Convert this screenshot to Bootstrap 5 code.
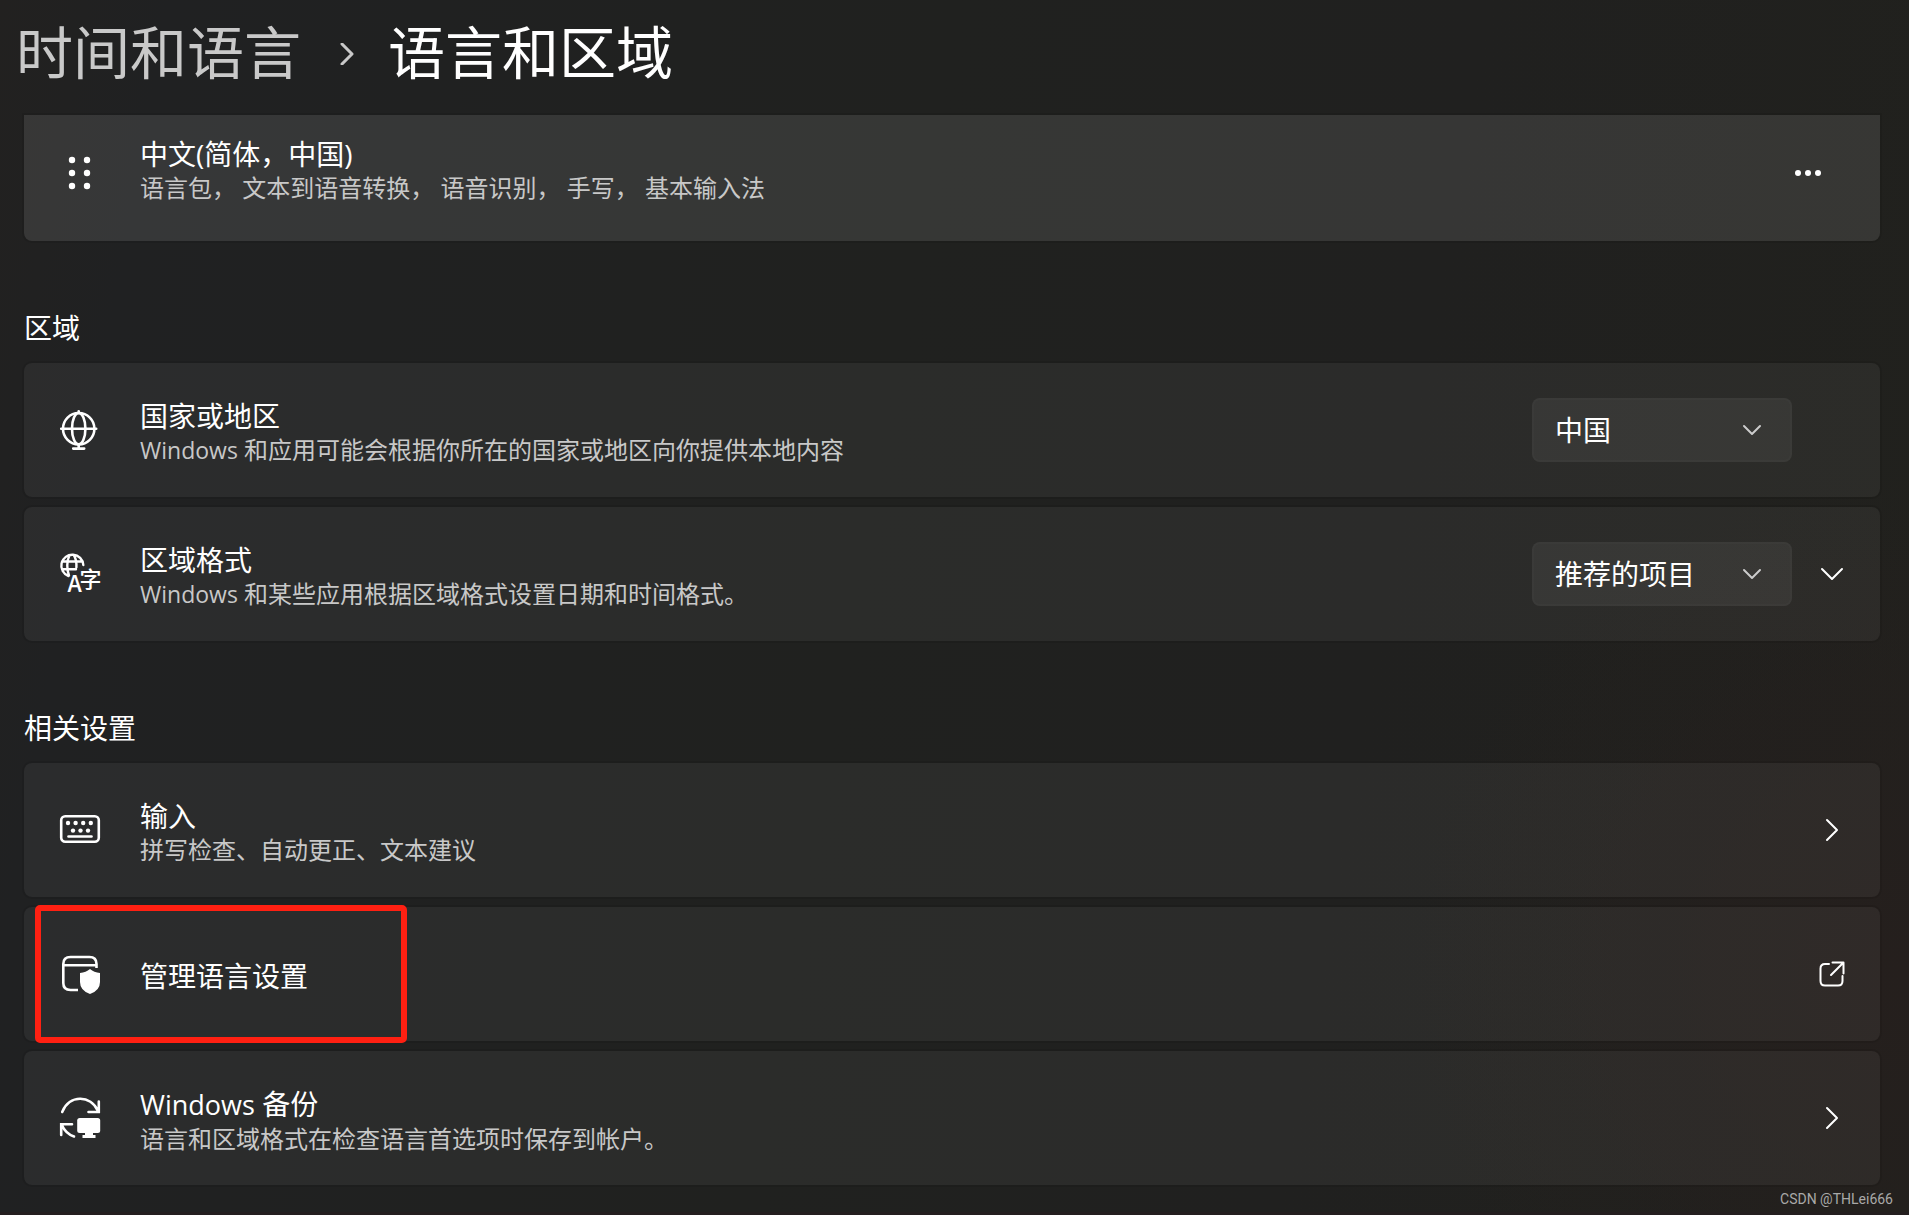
<!DOCTYPE html>
<html lang="zh-CN" data-bs-theme="dark">
<head>
<meta charset="utf-8">
<meta name="viewport" content="width=device-width, initial-scale=1">
<title>语言和区域</title>
<link href="https://cdn.jsdelivr.net/npm/bootstrap@5.3.0/dist/css/bootstrap.min.css" rel="stylesheet">
<style>
body{font-family:"Open Sans","Noto Sans CJK SC",sans-serif;color:#fff;min-height:100vh;
 background:radial-gradient(ellipse 500px 500px at 100% 80%,#251f1d 0,rgba(37,31,29,0) 100%),linear-gradient(100deg,#222120 0,#202122 8%,#20211f 45%,#20201f 70%,#21211d 100%)}
.page-head{height:115px;padding:4px 16px 0;font-size:57px;line-height:80px}
.page-head a{color:#c9c9c9;text-decoration:none}
.page-head h1{font-size:57px;line-height:80px;font-weight:400}
.crumb-sep{width:14px;height:22px;margin:4px 34px 0 39px}
.settings{padding:0 29px 0 24px}
.section-title{font-size:28px;line-height:38px;font-weight:400;margin:68px 0 16px}
.rows{gap:10px}
.setting{position:relative;min-height:134px;padding:4px 28px 0 36px;border-radius:8px;background:rgba(255,255,255,.05);box-shadow:0 0 0 2px rgba(0,0,0,.08);color:#fff;text-decoration:none}
.setting-lang{min-height:126px;padding:0 52px 10px 36px;background:rgba(255,255,255,.1);border-radius:0 0 8px 8px}
.setting-lang .lang-text{padding:0 0 4px 40px}
.setting svg{display:block;flex:none;overflow:visible}
.setting-icon{margin:-4px 40px 0 0}
.two-line{padding-top:2px}
.lift{margin-top:-4px}
.slot{width:40px;height:40px}
.name{font-size:28px;line-height:34px}
.desc{font-size:24px;line-height:34px;color:#c8c8c8}
.name .latin{font-size:27px}
.desc .latin{font-size:23px}
.plain{background:none;border:0;padding:0;color:#fff}
.picker{position:relative;width:260px;margin-right:20px}
.picker select{appearance:none;width:100%;height:64px;padding:0 56px 0 21px;border:2px solid rgba(255,255,255,.02);border-radius:8px;background:rgba(255,255,255,.06);color:#fff;font-size:28px;font-family:inherit}
.picker select option{background:#373735}
.picker svg{position:absolute;right:30px;top:26px;pointer-events:none}
.highlight{position:absolute;left:11px;top:-2px;width:372px;height:138px;border:6px solid #ff2012;border-radius:5px;pointer-events:none}
.credit{height:30px;padding-right:16px;border-bottom:3px solid #241e1f;font:14px/28px Roboto,sans-serif;color:#a9a9a8}
.ln{fill:none;stroke:currentColor;stroke-width:2;stroke-linecap:round;stroke-linejoin:round}
</style>
</head>
<body>
<header class="page-head">
 <nav class="d-flex align-items-center pt-2" aria-label="导航">
  <a href="#">时间和语言</a>
  <svg class="crumb-sep" viewBox="0 0 14 22" aria-hidden="true"><path class="ln" d="M2 1 12 11 2 21" style="color:#c9c9c9;stroke-width:3"/></svg>
  <h1 class="m-0">语言和区域</h1>
 </nav>
</header>
<main class="settings">
 <section class="setting setting-lang d-flex align-items-center">
  <button class="plain" aria-label="拖动"><svg width="40" height="40" viewBox="0 0 40 40" fill="currentColor"><circle cx="12" cy="7" r="3.2"/><circle cx="27" cy="7" r="3.2"/><circle cx="12" cy="20" r="3.2"/><circle cx="27" cy="20" r="3.2"/><circle cx="12" cy="33" r="3.2"/><circle cx="27" cy="33" r="3.2"/></svg></button>
  <div class="flex-grow-1 lang-text">
   <div class="name">中文(简体，中国)</div>
   <div class="desc">语言包， 文本到语音转换， 语音识别， 手写， 基本输入法</div>
  </div>
  <button class="plain" aria-label="更多选项"><svg class="slot" viewBox="0 0 40 40" fill="currentColor"><circle cx="10" cy="20" r="3"/><circle cx="20" cy="20" r="3"/><circle cx="30" cy="20" r="3"/></svg></button>
 </section>

 <h2 class="section-title">区域</h2>
 <div class="d-flex flex-column rows">
  <section class="setting d-flex align-items-center">
   <svg class="setting-icon" width="40" height="40" viewBox="0 0 40 40" aria-hidden="true"><g class="ln" style="stroke-width:2.6"><circle cx="18.7" cy="18.7" r="15.7"/><ellipse cx="18.7" cy="18.7" rx="6.7" ry="15.7"/><path d="M1.2 18.7h35M18.7 1.2V3M18.7 34.5v4M13.2 38.6h11"/></g></svg>
   <div class="flex-grow-1 two-line">
    <label class="name d-block" for="country">国家或地区</label>
    <div class="desc"><span class="latin">Windows</span> 和应用可能会根据你所在的国家或地区向你提供本地内容</div>
   </div>
   <div class="picker lift"><select id="country"><option>中国</option></select><svg width="20" height="12" viewBox="0 0 20 12"><path class="ln" d="M2 2l8 8 8-8" style="color:#ccc"/></svg></div>
   <div class="slot"></div>
  </section>
  <section class="setting d-flex align-items-center">
   <svg class="setting-icon" width="40" height="40" viewBox="0 0 40 40" aria-hidden="true"><g class="ln" style="stroke-width:2.4"><path d="M8.500 22A11 11 0 1 1 23.300 11M2 7.500h20M2 15.200h14M9 21.400C6.600 16 6.600 6.500 9.500 1.500M14 1.500C16 4.500 16.600 9 16.400 13.500"/></g><g fill="currentColor" font-family="Noto Sans CJK SC,sans-serif"><text x="7.500" y="37.500" font-size="23" font-weight="500">A</text><text x="19.500" y="32.500" font-size="22" font-weight="500">字</text></g></svg>
   <div class="flex-grow-1 two-line">
    <label class="name d-block" for="format">区域格式</label>
    <div class="desc"><span class="latin">Windows</span> 和某些应用根据区域格式设置日期和时间格式。</div>
   </div>
   <div class="picker lift"><select id="format"><option>推荐的项目</option></select><svg width="20" height="12" viewBox="0 0 20 12"><path class="ln" d="M2 2l8 8 8-8" style="color:#ccc"/></svg></div>
   <button class="plain lift" aria-label="展开"><svg class="slot" viewBox="0 0 40 40"><path class="ln" d="M10 15l10 10 10-10"/></svg></button>
  </section>
 </div>

 <h2 class="section-title">相关设置</h2>
 <div class="d-flex flex-column rows">
  <a class="setting d-flex align-items-center" href="#">
   <svg class="setting-icon" width="40" height="40" viewBox="0 0 40 40" aria-hidden="true"><rect class="ln" x="1.200" y="6.200" width="37.600" height="25.600" rx="4" style="stroke-width:2.600"/><g fill="currentColor"><circle cx="8" cy="13" r="2.200"/><circle cx="15.600" cy="13" r="2.200"/><circle cx="23.200" cy="13" r="2.200"/><circle cx="30.800" cy="13" r="2.200"/><circle cx="13" cy="20.600" r="2.200"/><circle cx="20.500" cy="20.600" r="2.200"/><circle cx="28" cy="20.600" r="2.200"/></g><path class="ln" d="M8.500 26.500h23" style="stroke-width:2.600"/></svg>
   <div class="flex-grow-1 two-line"><div class="name">输入</div><div class="desc">拼写检查、自动更正、文本建议</div></div>
   <svg class="slot lift" viewBox="0 0 40 40"><path class="ln" d="M15 10l10 10-10 10"/></svg>
  </a>
  <a class="setting d-flex align-items-center" href="#">
   <svg class="setting-icon" width="40" height="40" viewBox="0 0 40 40" aria-hidden="true"><path class="ln" d="M36.500 14V10Q36.500 3 29.500 3H10.500Q3.300 3 3.300 10V29Q3.300 36 10.500 36H18M3.300 11.200H36.500" style="stroke-width:2.600;stroke-linecap:butt"/><path fill="currentColor" d="M30 15Q34 18.500 40 19V28Q40 36.500 30 40Q20 36.500 20 28V19Q26 18.500 30 15Z"/></svg>
   <div class="flex-grow-1 name">管理语言设置</div>
   <svg class="slot lift" viewBox="0 0 40 40"><path class="ln" d="M17 10H13Q8.500 10 8.500 14.500V27Q8.500 31.500 13 31.500H26Q30.500 31.500 30.500 27V22M20.500 8.500H31.500V19.500M31.500 8.500 19 21"/></svg>
   <span class="highlight"></span>
  </a>
  <a class="setting d-flex align-items-center" href="#">
   <svg class="setting-icon" width="40" height="40" viewBox="0 0 40 40" aria-hidden="true"><g class="ln" style="stroke-width:2.600;stroke-linejoin:miter"><path d="M2.200 14C9 -3.500 31 -3.500 38 13M38.800 3.500V14H28.500M12 26.200H1.200V37M1.800 27C4 32 8 36.500 14 38.500"/></g><g fill="currentColor"><rect x="17.200" y="20" width="23" height="15" rx="2.500"/><path d="M25 34h8v3h2.500v3H22.500v-3H25z"/></g></svg>
   <div class="flex-grow-1 two-line"><div class="name"><span class="latin">Windows</span> 备份</div><div class="desc">语言和区域格式在检查语言首选项时保存到帐户。</div></div>
   <svg class="slot lift" viewBox="0 0 40 40"><path class="ln" d="M15 10l10 10-10 10"/></svg>
  </a>
 </div>
</main>
<footer class="credit text-end">CSDN @THLei666</footer>
<script src="https://cdn.jsdelivr.net/npm/bootstrap@5.3.0/dist/js/bootstrap.bundle.min.js"></script>
</body>
</html>
